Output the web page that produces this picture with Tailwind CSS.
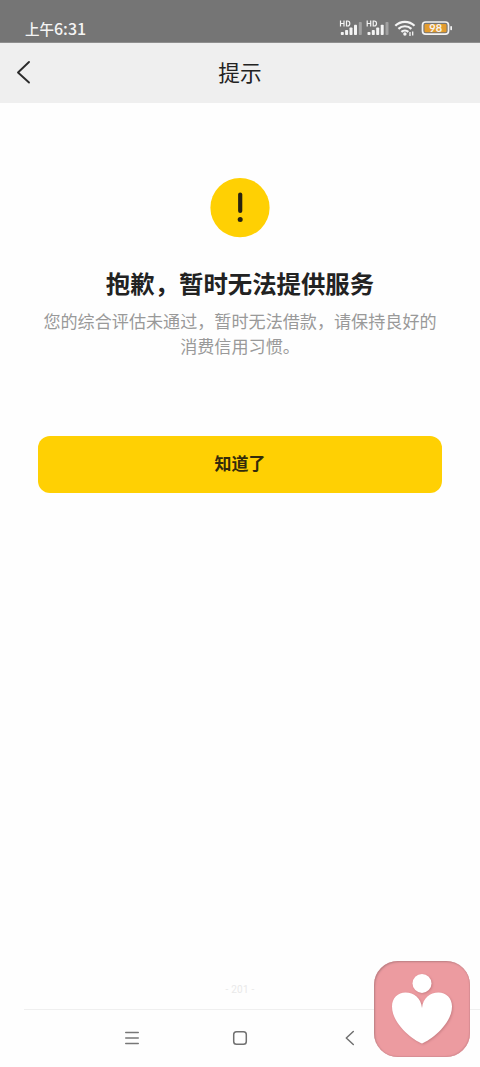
<!DOCTYPE html>
<html lang="zh-CN">
<head>
    <meta charset="UTF-8">
    <meta name="viewport" content="width=device-width, initial-scale=1.0">
    <title>提示</title>
    <script src="https://cdn.jsdelivr.net/npm/@tailwindcss/browser@4"></script>
    <style>
        body {
            font-family: 'Noto Sans CJK SC', sans-serif;
        }
    </style>
</head>
<body class="bg-[#fefefe]">
    <div class="relative w-[480px] h-[1067px] flex flex-col overflow-hidden">

        <!-- Status bar -->
        <div class="h-[43px] shrink-0 bg-[#757575] border-b border-[#8f8f8f] flex items-start justify-between pl-[25px] pr-[27px] pt-[18px] text-[#f4f4f4]">
            <span class="text-[14.5px] leading-[20px] font-medium whitespace-nowrap">上午<span class="text-[16px]">6:31</span></span>
            <svg width="114" height="20" viewBox="339 18 114 20" fill="currentColor">
                <g id="signal">
                    <path d="M340.500 20.500v6M344 20.500v6M340.500 23.500h3.500M346.500 21v5h1c1.600 0 2.300-1 2.300-2.500s-.7-2.500-2.300-2.500z" fill="none" stroke="currentColor" stroke-width="1.200"/>
                    <rect x="340.800" y="32" width="3" height="3" rx=".8"/>
                    <rect x="345.100" y="30" width="3" height="5" rx=".8"/>
                    <rect x="349.500" y="27.500" width="3" height="7.500" rx=".8"/>
                    <rect x="354" y="24.800" width="3" height="10.200" rx=".8"/>
                    <rect x="358.800" y="22" width="3" height="13" rx=".8" opacity=".35"/>
                </g>
                <use href="#signal" x="26.700"/>
                <!-- Wi-Fi -->
                <g fill="none" stroke="currentColor" stroke-width="2.200">
                    <path d="M395.300 25.800a13.500 13.500 0 0 1 19.200 0"/>
                    <path d="M398.400 28.900a9.300 9.300 0 0 1 13 0"/>
                    <path d="M401.400 31.900a5.200 5.200 0 0 1 7 0"/>
                </g>
                <circle cx="404.900" cy="34" r="1.700"/>
                <path d="M410 32v4M412.700 31.500v4" stroke="currentColor" stroke-width="1.300"/>
                <!-- Battery -->
                <rect x="422.500" y="22" width="26" height="12.200" rx="3.200" fill="#757575" stroke="currentColor" stroke-width="1.700"/>
                <rect x="424.500" y="24" width="22" height="8.200" rx="1" fill="#e39c2e"/>
                <rect x="450.300" y="26" width="1.700" height="4.300" rx=".8"/>
                <text x="435.700" y="32.100" text-anchor="middle" font-family="Lato" font-size="11" font-weight="700">98</text>
            </svg>
        </div>

        <!-- Title bar -->
        <header class="h-[60px] shrink-0 bg-[#efefef] grid grid-cols-[1fr_auto_1fr] items-center pl-4">
            <svg class="-mt-0.5" width="16" height="24" viewBox="0 0 16 24" fill="none" stroke="#2b2b2b" stroke-width="1.900" stroke-linecap="round" stroke-linejoin="round">
                <path d="M13 2L2 12.500L13 22.500"/>
            </svg>
            <h1 class="text-[21.7px] leading-8 text-[#222] pr-4 pb-0.5">提示</h1>
        </header>

        <!-- Message -->
        <main class="flex flex-col items-center px-[38px] pt-[75px]">
            <svg width="60" height="60" viewBox="0 0 60 60">
                <circle cx="30" cy="29.700" r="29.600" fill="#ffd003"/>
                <path d="M30.200 16.500v16.500" stroke="#28230f" stroke-width="4.200" stroke-linecap="round"/>
                <circle cx="30.200" cy="41.500" r="2.500" fill="#28230f"/>
            </svg>
            <h2 class="mt-[27px] text-[24.4px] leading-9 font-bold text-[#222] whitespace-nowrap">抱歉，暂时无法提供服务</h2>
            <p class="mt-2 text-[17.1px] leading-[24.5px] text-[#999] text-center whitespace-nowrap">您的综合评估未通过，暂时无法借款，请保持良好的<br>消费信用习惯。</p>
            <button class="mt-[77.5px] w-[404px] h-[57.5px] rounded-[12px] bg-[#ffd003] pb-[3px] text-[17px] font-bold text-[#332b0b]">知道了</button>
        </main>

        <!-- Page mark -->
        <div class="mt-auto text-center text-[10px] leading-4 text-[#e9e9e9] font-['Roboto'] tracking-wide pb-[11px]">- 201 -</div>

        <!-- System navigation -->
        <nav class="h-[58px] shrink-0 ml-6 border-t border-[#efefef] flex pl-[100px] pt-5 gap-[92px]">
            <svg width="16" height="16" viewBox="0 0 16 16" fill="none" stroke="#777" stroke-width="1.400" stroke-linecap="round">
                <path d="M1.700 2.500h12.600M1.700 8h12.600M1.700 13.500h12.600"/>
            </svg>
            <svg width="16" height="16" viewBox="0 0 16 16" fill="none" stroke="#707070" stroke-width="1.500">
                <rect x="1.700" y="1.700" width="12.600" height="12.600" rx="2.800"/>
            </svg>
            <svg width="16" height="16" viewBox="0 0 16 16" fill="none" stroke="#707070" stroke-width="1.500" stroke-linecap="round" stroke-linejoin="round">
                <path d="M13.300 1.500L6.300 8L13.300 14.500"/>
            </svg>
        </nav>

        <!-- Floating badge -->
        <div class="absolute left-[374px] top-[961px] size-24 rounded-[24px] bg-[#ec9ba0] shadow-[inset_1px_1px_2px_#b87d81,inset_-1px_-1px_1px_#da8f94]">
            <svg class="drop-shadow-[1px_1px_1px_#c97f84]" width="96" height="96" viewBox="374 961 96 96" fill="#fff">
                <circle cx="422" cy="983.400" r="9.500"/>
                <path d="M422 1043.500C413 1040 392 1024 392 1006.500C392 998 398 992.500 405.500 992.500C414 992.500 421 998 422 1008C423 998 430 992.500 438.500 992.500C446 992.500 452 998 452 1006.500C452 1024 431 1040 422 1043.500Z"/>
            </svg>
        </div>
    </div>
</body>
</html>
